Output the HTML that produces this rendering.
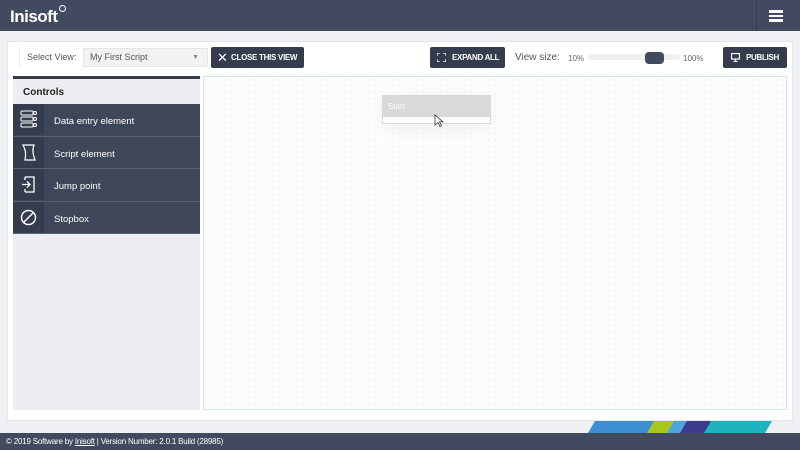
<!DOCTYPE html><html><head><style>
*{margin:0;padding:0;box-sizing:border-box}
body{width:800px;height:450px;overflow:hidden;background:#eef0f4;font-family:"Liberation Sans",sans-serif;position:relative;font-size:9px;color:#333}
.hdr{position:absolute;left:0;top:0;width:800px;height:31px;background:#414a5e}
.logo{position:absolute;left:10px;top:7px;color:#fff;font-weight:bold;font-size:17px;letter-spacing:-0.5px}
.logo i{position:absolute;right:-8px;top:-2px;width:7px;height:7px;border:1.5px solid #fff;border-radius:50%}
.menu{position:absolute;left:756px;top:0;width:44px;height:31px;border-left:1px solid #353c4e}
.menu b{position:absolute;left:12px;width:14px;height:2.5px;background:#fff}
.panel{position:absolute;left:7px;top:41px;width:786px;height:380px;background:#fff;border:1px solid #e3e6ea}
.btn{position:absolute;top:47px;height:21px;background:#353c4e;color:#fff;font-weight:bold;font-size:8px;letter-spacing:-0.3px;white-space:nowrap;line-height:21px;border-radius:2px}
.sel{position:absolute;left:83px;top:48px;width:125px;height:19px;background:#f1f2f4;border:1px solid #e3e5e8;color:#555;line-height:17px;padding-left:6px;font-size:9px}
.side{position:absolute;left:13px;top:76px;width:187px;height:334px;background:#eceef2;border-top:3px solid #353c4e}
.side h3{height:25px;line-height:28px;padding-left:10px;font-size:10px;color:#222}
.it{height:32.5px;background:#3e4659;border-bottom:1px solid #59627a;position:relative;color:#fff;font-size:9.5px;line-height:35px;padding-left:41px}
.it .ic{position:absolute;left:0;top:0;width:31px;height:31px;background:#353c4e}
.canvas{position:absolute;left:203px;top:76px;width:584px;height:334px;border:1px solid #d5e3ee;background-color:#fcfdfe;background-image:radial-gradient(#e4e8ee 0.6px,transparent 0.8px);background-size:6px 6px}
.foot{position:absolute;left:0;top:433px;width:800px;height:17px;background:#414a5e;color:#fff;font-size:8px;letter-spacing:-0.2px;line-height:17px;padding-left:6px}
</style></head><body>
<div class="hdr"><div class="logo">Inisoft<i></i></div>
<div class="menu"><b style="top:10px"></b><b style="top:14.5px"></b><b style="top:19px"></b></div></div>
<div class="panel"></div>
<div style="position:absolute;left:19px;top:47px;height:21px;border-left:1px solid #eee"></div>
<div style="position:absolute;left:27px;top:52px;color:#555;font-size:9px">Select View:</div>
<div class="sel">My First Script<span style="position:absolute;right:8px;top:0;font-size:7px;color:#888">▼</span></div>
<div class="btn" style="left:211px;width:93px;padding-left:20px"><span style="position:absolute;left:6px;top:0;font-weight:normal;font-size:13px">✕</span>CLOSE THIS VIEW</div>
<div class="btn" style="left:430px;width:75px;padding-left:22px"><svg style="position:absolute;left:7px;top:6px" width="9" height="9" viewBox="0 0 9 9" stroke="#fff" fill="none" stroke-width="1.2"><path d="M0 3V0h3M6 0h3v3M9 6v3H6M3 9H0V6"/></svg>EXPAND ALL</div>
<div style="position:absolute;left:515px;top:52px;font-size:10px;color:#555">View size:</div>
<div style="position:absolute;left:568px;top:54px;font-size:8px;color:#666">10%</div>
<div style="position:absolute;left:588px;top:54px;width:92px;height:6px;background:#eef0f3;border-radius:3px"></div>
<div style="position:absolute;left:645px;top:52px;width:19px;height:12px;background:#414a5e;border-radius:4px"></div>
<div style="position:absolute;left:683px;top:54px;font-size:8px;color:#666">100%</div>
<div class="btn" style="left:723px;width:64px;padding-left:23px"><svg style="position:absolute;left:8px;top:6px" width="9" height="9" viewBox="0 0 9 9" fill="none" stroke="#fff" stroke-width="1.2"><rect x="0.5" y="0.5" width="8" height="5.5"/><path d="M4.5 6v2M2.5 8.5h4"/></svg>PUBLISH</div>
<div class="side"><h3>Controls</h3>
<div class="it"><div class="ic"><svg width="31" height="31" fill="none" stroke="#fff" stroke-width="1"><rect x="8" y="7" width="12" height="4" rx="1"/><rect x="8" y="13" width="12" height="4" rx="1"/><rect x="8" y="19" width="12" height="4" rx="1"/><circle cx="22" cy="9" r="1.5"/><circle cx="22" cy="15" r="1.5"/><circle cx="22" cy="21" r="1.5"/></svg></div>Data entry element</div>
<div class="it"><div class="ic"><svg width="31" height="31" fill="none" stroke="#fff" stroke-width="1.2"><path d="M10 8h11c-2 5 -1 9 1 15H12c1-5 1-9-2-15z"/></svg></div>Script element</div>
<div class="it"><div class="ic"><svg width="31" height="31" fill="none" stroke="#fff" stroke-width="1.3"><path d="M12 8h9v15h-9M9 15.5h8M14 12.5l3 3-3 3M12 8v3M12 20v3"/></svg></div>Jump point</div>
<div class="it"><div class="ic"><svg width="31" height="31" fill="none" stroke="#fff" stroke-width="1.4"><circle cx="15.5" cy="15.5" r="7"/><path d="M10.5 20.5l10-10"/></svg></div>Stopbox</div>
</div>
<div class="canvas"></div>
<div style="position:absolute;left:382px;top:95px;width:109px;height:29px;background:#fff;border:1px solid #d8d8da;box-shadow:0 4px 20px rgba(0,0,0,0.06)"><div style="height:21px;background:#d9d9db;color:#fff;font-size:8px;line-height:21px;padding-left:5px">Start</div></div>
<svg style="position:absolute;left:434px;top:114px" width="10" height="14"><path d="M1 1v10l3-2.5 2 4 1.5-.8-2-3.8h3.5z" fill="#fff" stroke="#333" stroke-width="0.8"/></svg>
<svg style="position:absolute;left:585px;top:421px" width="200" height="12"><polygon points="10,0 70,0 63,12 3,12" fill="#3b8fd2"/><polygon points="69,0 90,0 83,12 62,12" fill="#a9c61f"/><polygon points="89,0 103,0 96,12 82,12" fill="#4aa6e0"/><polygon points="102,0 127,0 120,12 95,12" fill="#3d3a8e"/><polygon points="126,0 187,0 180,12 119,12" fill="#1eb3bf"/></svg>
<div class="foot">© 2019 Software by <u>Inisoft</u> | Version Number: 2.0.1 Build (28985)</div>
</body></html>
